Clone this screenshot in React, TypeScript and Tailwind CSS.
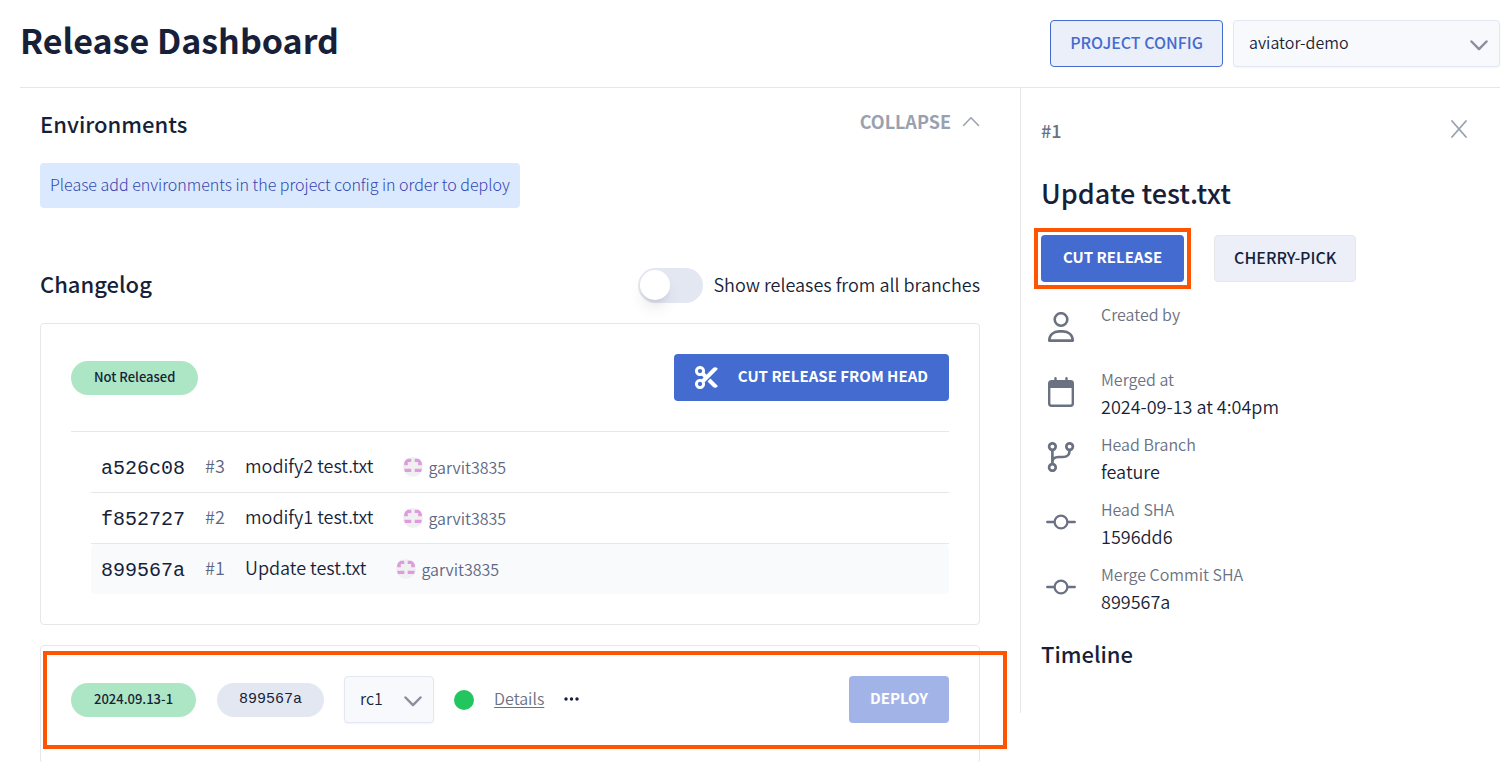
import React, { useState } from "react";
import { FaScissors } from "react-icons/fa6";

const commits = [
  { sha: "a526c08", id: "#3", title: "modify2 test.txt", author: "garvit3835", active: false },
  { sha: "f852727", id: "#2", title: "modify1 test.txt", author: "garvit3835", active: false },
  { sha: "899567a", id: "#1", title: "Update test.txt", author: "garvit3835", active: true },
];

const mono = "font-['Liberation_Mono',monospace]";

function Chevron({ className }: { className: string }) {
  return (
    <svg viewBox="0 0 18 11" fill="none" stroke="currentColor" strokeLinecap="round" strokeLinejoin="round" className={className} aria-hidden="true">
      <path d="M1.5 1.5 9 9.2l7.500-7.700" />
    </svg>
  );
}

function UserIcon() {
  return (
    <svg viewBox="0 0 30 30" fill="none" stroke="currentColor" strokeWidth="2.600" strokeLinejoin="round" className="size-[30px]" aria-hidden="true">
      <circle cx="15" cy="7.5" r="6.3" />
      <path d="M3.2 28.600c0-5.600 4.300-9.200 10-9.200h3.600c5.700 0 10 3.600 10 9.200z" />
    </svg>
  );
}

function CalendarIcon() {
  return (
    <svg viewBox="0 0 30 30" fill="none" className="size-[30px]" aria-hidden="true">
      <rect x="3.2" y="4.2" width="23.6" height="24.6" rx="2.2" stroke="currentColor" strokeWidth="2.4" />
      <path d="M3 4h24v7H3z" fill="currentColor" />
      <path d="M9.5 1.200v4M20.5 1.200v4" stroke="currentColor" strokeWidth="2.400" strokeLinecap="round" />
    </svg>
  );
}

function BranchIcon() {
  return (
    <svg viewBox="0 0 30 30" fill="none" stroke="currentColor" strokeWidth="2.7" className="size-[30px]" aria-hidden="true">
      <circle cx="6.4" cy="4.6" r="3.3" />
      <circle cx="23.6" cy="4.6" r="3.3" />
      <circle cx="6.4" cy="25.4" r="3.3" />
      <path d="M6.4 8v14M23.6 8c0 5-2 7-7 7h-4c-3.800 0-6.200 1.500-6.200 5" />
    </svg>
  );
}

function CommitIcon() {
  return (
    <svg viewBox="0 0 30 30" fill="none" stroke="currentColor" strokeWidth="2.3" strokeLinecap="round" className="size-[30px]" aria-hidden="true">
      <circle cx="15" cy="15" r="6.400" />
      <path d="M1.200 15h7M21.800 15h7" />
    </svg>
  );
}

function Avatar() {
  return (
    <svg viewBox="0 0 20 20" className="size-5 shrink-0" aria-hidden="true">
      <circle cx="10" cy="10" r="10" fill="#f0f0f0" />
      <path
        d="M4.500 1.700H8.300V5H4.800V8.300H1.200V5.500Q2.300 3 4.500 1.700zM11.700 1.700H15.500Q17.700 3 18.800 5.500V8.300H15.200V5H11.700zM1.200 11.800H8.300V15H1.900zM11.700 11.800H18.800L18.100 15H11.700z"
        fill="#df9be0"
      />
    </svg>
  );
}

const details = [
  { label: "Created by", value: "", icon: <UserIcon /> },
  { label: "Merged at", value: "2024-09-13 at 4:04pm", icon: <CalendarIcon /> },
  { label: "Head Branch", value: "feature", icon: <BranchIcon /> },
  { label: "Head SHA", value: "1596dd6", icon: <CommitIcon /> },
  { label: "Merge Commit SHA", value: "899567a", icon: <CommitIcon /> },
];

function Header() {
  return (
    <header className="flex h-[88px] items-center justify-between border-b border-gray-200">
      <h1 className="pb-2 text-[34px] leading-10 font-bold">Release Dashboard</h1>
      <div className="flex gap-[10px]">
        <button className="h-[47px] rounded-[4px] border border-[#446bcf] bg-[#ebeffa] px-[19px] pb-1 text-base font-medium text-[#446bcf]">
          PROJECT CONFIG
        </button>
        <div className="relative w-[267px]">
          <select aria-label="Project" className="h-[47px] w-full appearance-none rounded-[4px] border border-[#e3e7f2] bg-[#f8f9fd] px-[15px] pb-1 text-base font-[350] shadow-xs">
            <option>aviator-demo</option>
          </select>
          <Chevron className="pointer-events-none absolute top-5 right-3 h-[11px] w-[18px] stroke-[2.5] text-[#8b8fa0]" />
        </div>
      </div>
    </header>
  );
}

function Changelog() {
  const [all, setAll] = useState(false);
  return (
    <section className="mt-[59px]">
      <div className="flex items-center justify-between">
        <h2 className="pb-1 text-[22px] leading-8 font-medium">Changelog</h2>
        <label className="flex items-center gap-[10px] text-lg leading-8">
          <input type="checkbox" checked={all} onChange={(e) => setAll(e.target.checked)} className="peer sr-only" />
          <span className="flex h-[35px] w-[65px] items-center rounded-full bg-[#e3e7f2] p-0.5 peer-checked:justify-end">
            <span className="size-[30px] rounded-full bg-white shadow-lg" />
          </span>
          <span className="pb-0.5">Show releases from all branches</span>
        </label>
      </div>

      <div className="mt-5 rounded-[4px] border border-gray-200 p-[30px]">
        <div className="flex items-center justify-between">
          <span className="rounded-full bg-[#ade6c5] px-[23px] pb-0.5 text-[13px] leading-8 font-medium">Not Released</span>
          <button className="flex h-[47px] items-center gap-5 rounded-[4px] bg-[#446bcf] px-[21px] pb-0.5 text-[15px] font-bold text-white">
            <FaScissors className="mt-0.5 size-[23px]" />
            CUT RELEASE FROM HEAD
          </button>
        </div>
        <ul className="mt-[30px] border-t border-gray-200 pt-[10px] pl-5">
          {commits.map((c) => (
            <li
              key={c.sha}
              className={
                c.active
                  ? "flex h-[50px] items-center rounded-[4px] bg-[#f9fafc] px-[10px]"
                  : "flex h-[51px] items-center border-b border-gray-200 px-[10px]"
              }
            >
              <span className={`${mono} w-[104px] pt-1 text-xl leading-7`}>{c.sha}</span>
              <span className="w-10 pb-1 text-lg leading-7 text-[#5d6784]">{c.id}</span>
              <span className="pb-1 text-lg leading-7">{c.title}</span>
              <span className="ml-[30px] flex items-center gap-[5px] text-base leading-7 text-[#5d6784]">
                <Avatar />
                {c.author}
              </span>
            </li>
          ))}
        </ul>
      </div>
    </section>
  );
}

function ReleaseRow() {
  return (
    <div className="relative mt-5 rounded-[4px] border border-gray-200 px-[30px] pt-[30px] pb-10">
      <div className="flex items-center">
        <span className="rounded-full bg-[#ade6c5] px-[23px] pb-0.5 text-[13px] leading-8 font-medium">2024.09.13-1</span>
        <span className={`${mono} ml-[21px] rounded-full bg-[#e3e7f2] px-[22px] text-[15px] leading-[34px] font-medium`}>899567a</span>
        <div className="relative ml-5">
          <select aria-label="Release candidate" className="h-[47px] w-[90px] appearance-none rounded-[4px] border border-[#e3e7f2] bg-[#f8f9fd] px-[15px] pb-1 text-base font-[350] shadow-xs">
            <option>rc1</option>
          </select>
          <Chevron className="pointer-events-none absolute top-5 right-3 h-[11px] w-[18px] stroke-[2.5] text-[#8b8fa0]" />
        </div>
        <span className="ml-5 size-5 rounded-full bg-[#22c55e]" />
        <a href="#details" className="ml-5 pb-1 text-base leading-7 text-gray-500 underline underline-offset-2">Details</a>
        <button aria-label="More actions" className="ml-5">
          <svg viewBox="0 0 16 4" fill="currentColor" className="mb-0.5 h-1 w-4" aria-hidden="true">
            <circle cx="2" cy="2" r="1.700" />
            <circle cx="7.500" cy="2" r="1.700" />
            <circle cx="13" cy="2" r="1.700" />
          </svg>
        </button>
        <button className="ml-auto h-[47px] rounded-[4px] bg-[#a2b4e7] px-[21px] pb-0.5 text-[15px] font-bold text-white">DEPLOY</button>
      </div>
      <div className="pointer-events-none absolute top-[5px] -right-7 left-0.5 h-[98px] border-4 border-[#ff5500]" />
    </div>
  );
}

function DetailsPanel() {
  return (
    <aside className="h-[625px] w-[480px] shrink-0 border-l border-gray-200 px-5 pt-7">
      <div className="flex items-center justify-between pr-3">
        <span className="text-lg leading-7 font-medium text-gray-500">#1</span>
        <button aria-label="Close" className="pb-0.5 text-gray-400">
          <svg viewBox="0 0 18 20" fill="none" stroke="currentColor" strokeWidth="1.800" strokeLinecap="round" className="h-5 w-[18px]" aria-hidden="true">
            <path d="M2 2l14 16M16 2l-14 16" />
          </svg>
        </button>
      </div>
      <h2 className="mt-[29px] text-[27px] leading-10 font-medium">Update test.txt</h2>
      <div className="mt-[22px] flex gap-[30px]">
        <div className="relative">
          <button className="h-[47px] rounded-[4px] bg-[#446bcf] px-[22px] pb-0.5 text-[15px] font-bold text-white">CUT RELEASE</button>
          <div className="pointer-events-none absolute -inset-[7px] border-4 border-[#ff5500]" />
        </div>
        <button className="h-[47px] rounded-[4px] border border-gray-200 bg-[#eceff8] px-[19px] pb-1 text-base font-medium">CHERRY-PICK</button>
      </div>
      <dl className="mt-[18px]">
        {details.map((d) => (
          <div key={d.label} className="flex h-[65px] items-start gap-[25px] pl-[5px]">
            <span className="mt-3 text-gray-500">{d.icon}</span>
            <div>
              <dt className="text-base leading-7 text-gray-500">{d.label}</dt>
              <dd className="text-lg leading-[26px]">{d.value}</dd>
            </div>
          </div>
        ))}
      </dl>
      <h3 className="mt-[10px] text-[22px] leading-9 font-medium">Timeline</h3>
    </aside>
  );
}

export default function App() {
  return (
    <div className="h-screen overflow-hidden bg-white pr-[11px] pl-5 font-['Noto_Sans_CJK_SC','Noto_Sans',sans-serif] font-[350] text-[#181f38]">
      <Header />
      <div className="flex items-start">
        <main className="min-w-0 flex-1 pt-[17px] pr-10 pl-5">
          <div className="flex items-center justify-between">
            <h2 className="text-[22px] leading-9 font-medium">Environments</h2>
            <button className="flex items-center gap-[11px] pb-1 text-lg leading-7 font-bold text-gray-400">
              COLLAPSE
              <Chevron className="h-[11px] w-[18px] rotate-180 stroke-[1.5]" />
            </button>
          </div>
          <p className="mt-[22px] w-fit rounded-[4px] bg-[#dbe9fe] px-[10px] pb-0.5 text-base leading-[43px] font-light text-[#3346af]">
            Please add environments in the project config in order to deploy
          </p>
          <Changelog />
          <ReleaseRow />
        </main>
        <DetailsPanel />
      </div>
    </div>
  );
}
